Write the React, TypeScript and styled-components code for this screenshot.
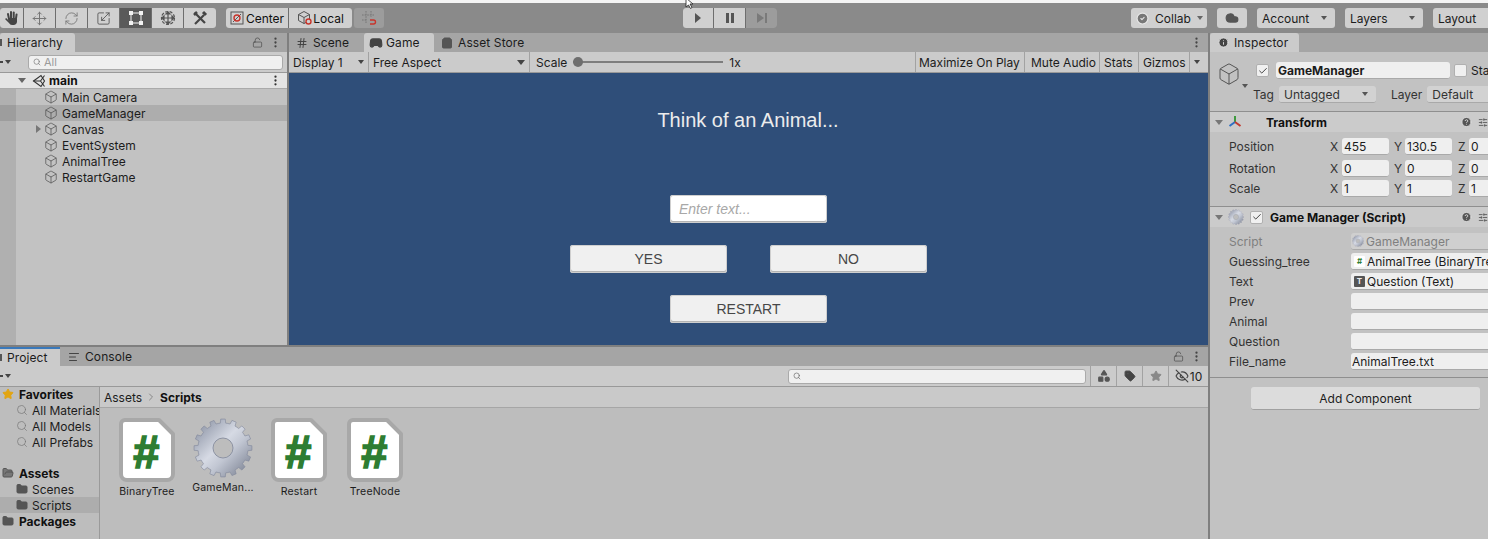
import React from "react";
import styled, { createGlobalStyle } from "styled-components";
import { Move, RefreshCw, Scaling, Box, Search, EllipsisVertical, Folder, FolderOpen, Star, Gamepad2, ShoppingBag, Hash, Check, Cloud, Info, CircleHelp, Tag, EyeOff, AlignLeft, SlidersHorizontal, LockOpen, Shapes, CircleCheck, ChevronRight } from "lucide-react";

const Global = createGlobalStyle`
  html, body { margin: 0; padding: 0; background: #bdbdbd; overflow: hidden; }
  * { box-sizing: border-box; }
  body { font-family: Inter, "Liberation Sans", sans-serif; font-size: 12px; color: #1c1c1c; }
`;

const Page = styled.div`
  position: relative; width: 1488px; height: 539px; overflow: hidden;
  display: flex; flex-direction: column; background: #7f7f7f;
`;
const TopStrip = styled.div`height: 3px; background: #f4f4f4;`;
const Toolbar = styled.div`
  height: 30px; background: #8a8a8a; display: flex; align-items: flex-start; padding-top: 5px;
`;
const ToolLeft = styled.div`width: 683px; display: flex; flex-shrink: 0;`;
const ButtonGroup = styled.div<{ $ml?: number }>`
  display: flex; height: 20px; margin-left: ${p => p.$ml ?? 0}px; gap: 1px; flex-shrink: 0;
  background: #6e6e6e; border-radius: 3px; overflow: hidden;
`;
const ToolButton = styled.div<{ $w: number; $active?: boolean; $dim?: boolean; $gap?: number }>`
  width: ${p => p.$w}px; height: 20px; display: flex; align-items: center; justify-content: center; gap: ${p => p.$gap ?? 2}px;
  background: ${p => (p.$active ? "#5a5a5a" : p.$dim ? "#9c9c9c" : "#d0d0d0")};
  color: ${p => (p.$active ? "#f0f0f0" : p.$dim ? "#777" : "#444")};
  font-size: 12px; white-space: nowrap;
  span { color: #111; }
`;
const ToolRight = styled.div`margin-left: 354px; display: flex; gap: 10px; flex-shrink: 0;`;
const DropButton = styled.div<{ $w: number; $pr?: number }>`
  width: ${p => p.$w}px; height: 20px; background: #d0d0d0; border-radius: 3px; color: #1c1c1c;
  display: flex; align-items: center; justify-content: space-between; padding: 0 ${p => p.$pr ?? 8}px 0 5px; flex-shrink: 0; font-size: 12px;
`;
const CloudButton = styled(DropButton)`justify-content: center; padding: 0;`;
const Triangle = styled.i<{ $dir?: "down" | "right"; $c?: string; $s?: number }>`
  display: inline-block; width: 0; height: 0; flex-shrink: 0;
  ${p => (p.$dir === "right"
    ? `border-top: ${p.$s ?? 4}px solid transparent; border-bottom: ${p.$s ?? 4}px solid transparent; border-left: ${(p.$s ?? 4) + 1}px solid ${p.$c ?? "#666"};`
    : `border-left: ${p.$s ?? 4}px solid transparent; border-right: ${p.$s ?? 4}px solid transparent; border-top: ${(p.$s ?? 4) + 1}px solid ${p.$c ?? "#444"};`)}
`;

const Workspace = styled.div`flex: 1; display: flex; gap: 2px; min-height: 0;`;
const LeftColumn = styled.div`width: 1208px; display: flex; flex-direction: column; gap: 2px;`;
const TopRow = styled.div`height: 312px; display: flex; gap: 2px;`;
const Panel = styled.div<{ $w?: number }>`
  ${p => (p.$w ? `width: ${p.$w}px;` : "flex: 1;")} display: flex; flex-direction: column; background: #c2c2c2; min-width: 0; overflow: hidden;
`;
const TabBar = styled.div`
  height: 19px; flex-shrink: 0; background: #a5a5a5; display: flex; align-items: stretch; color: #1c1c1c;
`;
const TabItem = styled.div<{ $active?: boolean; $w: number; $pl?: number; $blue?: boolean; $gap?: number }>`
  width: ${p => p.$w}px; padding-left: ${p => p.$pl ?? 7}px; display: flex; align-items: center; gap: ${p => p.$gap ?? 5}px;
  background: ${p => (p.$active ? "#cbcbcb" : "transparent")}; white-space: nowrap; overflow: hidden;
  border-radius: 3px 3px 0 0; letter-spacing: 0.1px;
  ${p => p.$blue && "border-top: 2px solid #3a79bb; border-radius: 0;"}
`;
const TabStub = styled.i`display: block; width: 2px; height: 7px; background: #555;`;
const TabTools = styled.div`margin-left: auto; display: flex; align-items: center; gap: 3px; padding-right: 5px; color: #444;`;
const SubBar = styled.div`
  height: 21px; flex-shrink: 0; background: #cbcbcb; border-bottom: 1px solid #999; display: flex; align-items: center;
`;
const MiniMenu = styled.div`width: 28px; padding-left: 0; display: flex; align-items: center; gap: 2px; color: #444; flex-shrink: 0;`;
const Dash = styled.i`display: block; width: 3px; height: 2px; background: #444;`;
const SearchBox = styled.div<{ $w: number; $ml?: number }>`
  width: ${p => p.$w}px; margin-left: ${p => p.$ml ?? 0}px; height: 15px; background: #f0f0f0; border: 1px solid #aaa; border-radius: 3px;
  display: flex; align-items: center; padding-left: 4px; gap: 3px; color: #9a9a9a; font-size: 11px; flex-shrink: 0;
`;
const TreeBody = styled.div`flex: 1; display: flex; min-height: 0;`;
const Gutter = styled.div`width: 16px; background: #b0b0b0; padding-top: 16px; flex-shrink: 0;`;
const GutterMark = styled.div`height: 16px; margin-top: 16px; background: #9d9d9d;`;
const TreeList = styled.div`flex: 1; min-width: 0;`;
const SceneRow = styled.div`
  height: 16px; margin-left: -16px; width: 287px; background: #e4e4e4; display: flex; align-items: center; border-bottom: 1px solid #aaa; font-weight: 700; color: #111;
`;
const TreeRow = styled.div<{ $sel?: boolean }>`
  height: 16px; display: flex; align-items: center; background: ${p => (p.$sel ? "#adadad" : "transparent")};
`;
const ArrowSlot = styled.div<{ $w: number }>`width: ${p => p.$w}px; display: flex; justify-content: flex-end; align-items: center; padding-right: 3px; flex-shrink: 0;`;
const RowText = styled.span<{ $ml?: number }>`margin-left: ${p => p.$ml ?? 4}px; white-space: nowrap;`;
const LogoSlot = styled.span`margin-left: 3px; display: flex;`;
const GameBar = styled(SubBar)``;
const BarCell = styled.div<{ $w: number; $between?: boolean; $pl?: number; $noLine?: boolean; $lineLeft?: boolean }>`
  width: ${p => p.$w}px; height: 100%; display: flex; align-items: center; padding-left: ${p => p.$pl ?? 4}px; padding-right: 4px;
  justify-content: ${p => (p.$between ? "space-between" : "flex-start")}; white-space: nowrap; flex-shrink: 0; color: #1c1c1c;
  border-right: ${p => (p.$noLine ? "none" : "1px solid #a2a2a2")};
  border-left: ${p => (p.$lineLeft ? "1px solid #a2a2a2" : "none")};
`;
const ScaleCell = styled.div`display: flex; align-items: center; width: 385px; padding-left: 6px; flex-shrink: 0;`;
const Slider = styled.div`
  position: relative; width: 150px; height: 2px; margin: 0 6px 0 6px; background: #7d7d7d;
  &::before { content: ""; position: absolute; left: 0; top: -4px; width: 10px; height: 10px; border-radius: 50%; background: #6e6e6e; }
`;
const GameView = styled.div`
  flex: 1; background: #2f4e79; display: flex; flex-direction: column; align-items: center; padding-top: 35px;
`;
const GameTitle = styled.div`
  font: 20px/24px "Liberation Sans", Arial, sans-serif; color: #ececec; margin-bottom: 63px; margin-left: -1px;
`;
const GameControl = styled.div<{ $input?: boolean }>`
  width: 157px; height: 28px; border-radius: 3px; display: flex; align-items: center;
  box-shadow: inset 0 0 0 1px #cfcfcf, inset 0 -1px 0 1px #b4b4b4;
  background: ${p => (p.$input ? "#ffffff" : "#f0f0f0")};
  justify-content: ${p => (p.$input ? "flex-start" : "center")};
  padding-left: ${p => (p.$input ? 9 : 0)}px;
  font: ${p => (p.$input ? "italic " : "")}14px "Liberation Sans", Arial, sans-serif;
  color: ${p => (p.$input ? "#a8a8a8" : "#474747")};
`;
const GameRow = styled.div`display: flex; gap: 43px; margin: 22px 0;`;

const Project = styled(Panel)`flex: 1; background: #bdbdbd;`;
const ProjectBody = styled.div`flex: 1; display: flex; min-height: 0;`;
const ProjectSide = styled.div`width: 100px; border-right: 1px solid #9a9a9a; flex-shrink: 0; overflow: hidden; padding-top: 0;`;
const SideRow = styled.div<{ $indent?: number; $bold?: boolean; $sel?: boolean; $mt?: number }>`
  height: 16px; display: flex; align-items: center; gap: ${p => (p.$bold ? 5 : 4)}px; padding-left: ${p => p.$indent ?? 2}px; margin-top: ${p => p.$mt ?? 0}px;
  font-weight: ${p => (p.$bold ? 700 : 400)}; white-space: nowrap; background: ${p => (p.$sel ? "#adadad" : "transparent")};
  color: ${p => (p.$bold ? "#111" : "#1c1c1c")};
  svg { flex-shrink: 0; }
`;
const ProjectMain = styled.div`flex: 1; min-width: 0; display: flex; flex-direction: column;`;
const Breadcrumb = styled.div`
  height: 21px; background: #c9c9c9; border-bottom: 1px solid #a6a6a6; display: flex; align-items: center; gap: 3px; padding-left: 4px; flex-shrink: 0;
  b { font-weight: 700; color: #111; }
`;
const AssetGrid = styled.div`display: flex; padding: 10px 0 0 9px;`;
const AssetCard = styled.div`
  width: 76px; display: flex; flex-direction: column; align-items: center; font-size: 10.5px; color: #1c1c1c; letter-spacing: 0.2px;
  svg { display: block; height: 64px; }
  span { margin-top: 3px; }
`;
const BarGap = styled.div<{ $w?: number }>`${p => (p.$w ? `width: ${p.$w}px; flex-shrink: 0;` : "flex: 1;")}`;
const FilterCell = styled.div<{ $w: number; $dark?: boolean }>`
  width: ${p => p.$w}px; height: 100%; display: flex; align-items: center; justify-content: center; gap: 1px; border-left: 1px solid #a2a2a2; flex-shrink: 0;
  color: ${p => (p.$dark ? "#222" : "#555")};
`;

const Inspector = styled(Panel)`flex: 1; background: #c2c2c2;`;
const InspectorHead = styled.div`
  height: 60px; border-bottom: 1px solid #8f8f8f; flex-shrink: 0; display: flex; flex-direction: column; padding: 10px 0 0 7px;
`;
const HeadLine = styled.div`display: flex; align-items: center; height: 17px; white-space: nowrap;`;
const CubeWrap = styled.div`position: relative; width: 24px; height: 24px; margin-top: 6px; flex-shrink: 0; color: #555;`;
const CubeArrow = styled.div`position: absolute; right: -7px; bottom: -2px; display: flex;`;
const CheckBox = styled.div<{ $off?: boolean; $ml?: number }>`
  width: 13px; height: 13px; border-radius: 2px; background: #f0f0f0; border: 1px solid #b0b0b0; flex-shrink: 0;
  margin-left: ${p => p.$ml ?? 0}px; display: flex; align-items: center; justify-content: center; color: #222;
`;
const TextField = styled.div<{ $w: number; $bold?: boolean; $grey?: boolean; $h?: number; $ml?: number }>`
  width: ${p => p.$w}px; height: ${p => p.$h ?? 17}px; background: ${p => (p.$grey ? "#cfcfcf" : "#efefef")}; border-radius: 3px; border-bottom: 1px solid #a9a9a9;
  display: flex; align-items: center; padding-left: 2px; gap: 2px; white-space: nowrap; flex-shrink: 0; overflow: hidden;
  margin-left: ${p => p.$ml ?? 0}px;
  font-weight: ${p => (p.$bold ? 700 : 400)}; color: ${p => (p.$grey ? "#7f7f7f" : "#1c1c1c")};
`;
const SelectField = styled.div<{ $w: number; $ml?: number }>`
  width: ${p => p.$w}px; margin-left: ${p => p.$ml ?? 0}px; height: 17px; background: #d2d2d2; border-radius: 3px; border-bottom: 1px solid #a9a9a9;
  display: flex; align-items: center; justify-content: space-between; padding: 0 8px 0 5px; flex-shrink: 0; white-space: nowrap;
`;
const TagLine = styled(HeadLine)`margin-top: 7px; padding-left: 36px; color: #333;`;
const InlineText = styled.span<{ $ml: number }>`margin-left: ${p => p.$ml}px;`;
const Section = styled.div<{ $h: number }>`height: ${p => p.$h}px; flex-shrink: 0; border-bottom: 1px solid #8f8f8f;`;
const SectionHead = styled.div`
  height: 20px; display: flex; align-items: center; padding-left: 5px; background: #cbcbcb; font-weight: 700; color: #111; position: relative;
`;
const HeadIcon = styled.span`margin-left: 5px; display: flex;`;
const HeadActions = styled.div`margin-left: auto; display: flex; gap: 6px; align-items: center; color: #555; width: 27px; flex-shrink: 0; overflow: hidden;`;
const TransformRow = styled.div<{ $mt: number }>`
  display: grid; grid-template-columns: 101px 12px 47px 5px 11px 47px 6px 11px 40px; margin-top: ${p => p.$mt}px; padding-left: 19px; height: 17px; align-items: center; color: #333;
`;
const ScriptRow = styled.div<{ $first?: boolean; $dim?: boolean }>`
  display: grid; grid-template-columns: 122px 200px; height: 17px; margin-top: ${p => (p.$first ? 6 : 3)}px; padding-left: 19px; align-items: center;
  color: ${p => (p.$dim ? "#7f7f7f" : "#333")};
  & > div { padding-left: 1px; }
`;
const AxisLabel = styled.span<{ $col: number }>`grid-column: ${p => p.$col};`;
const AddWrap = styled.div`display: flex; padding: 9px 0 0 41px;`;
const AddButton = styled.div`
  width: 229px; height: 23px; background: #dcdcdc; border-radius: 3px; border-bottom: 1px solid #a0a0a0; display: flex; align-items: center; justify-content: center;
`;
const Cursor = styled.svg`position: absolute; left: 685px; top: -2px;`;
const FieldIcon = styled.i<{ $bg: string; $fg: string }>`
  display: flex; width: 11px; height: 11px; background: ${p => p.$bg}; color: ${p => p.$fg}; align-items: center; justify-content: center; flex-shrink: 0; border-radius: 1px; font-style: normal;
  font-size: 8px; font-weight: 700; margin-left: 2px;
`;

const Cube = ({ s = 14 }: { s?: number }) => <Box size={s} strokeWidth={1.2} color="#4a4a4a" />;

const gearPath = (() => {
  const pts: string[] = [];
  const n = 16, cx = 30, cy = 30, ro = 29, ri = 25;
  for (let i = 0; i < n; i++) {
    const a = (i / n) * Math.PI * 2, w = Math.PI / n;
    const P = (r: number, t: number) => `${(cx + r * Math.cos(t)).toFixed(2)} ${(cy + r * Math.sin(t)).toFixed(2)}`;
    pts.push(`${i ? "L" : "M"}${P(ri, a - w)}`, `L${P(ri, a - w * 0.55)}`, `L${P(ro, a - w * 0.4)}`, `L${P(ro, a + w * 0.4)}`, `L${P(ri, a + w * 0.55)}`);
  }
  return pts.join(" ") + "Z";
})();

const GearIcon = ({ size, id }: { size: number; id: string }) => (
  <svg width={size} height={size} viewBox="0 0 60 60" style={{ height: size, flexShrink: 0 }}>
    <defs>
      <linearGradient id={id} x1="0" y1="0" x2="1" y2="1">
        <stop offset="0" stopColor="#7f8799" /><stop offset="0.45" stopColor="#d6dae4" /><stop offset="0.6" stopColor="#c2c7d3" /><stop offset="1" stopColor="#6f7687" />
      </linearGradient>
    </defs>
    <path d={gearPath} fill={`url(#${id})`} stroke="#80869a" strokeWidth="0.6" />
    <circle cx="30" cy="30" r="10" fill="#bdbdbd" stroke="#8d93a3" />
  </svg>
);

const ScriptIcon = () => (
  <svg width="56" height="64" viewBox="0 0 56 64">
    <path d="M6 2 H40 L54 16 V56 a6 6 0 0 1 -6 6 H8 a6 6 0 0 1 -6 -6 V6 a4 4 0 0 1 4 -4 Z" fill="#fff" stroke="#a8a8a8" strokeWidth="4" strokeLinejoin="round" />
    <text x="27.5" y="50" textAnchor="middle" fontFamily="'Liberation Sans', sans-serif" fontWeight="700" fontSize="47" fill="#2e7d32" stroke="#2e7d32" strokeWidth="1.6">#</text>
  </svg>
);

const HandTool = () => (
  <svg width="16" height="16" viewBox="0 0 16 16" fill="#444">
    <rect x="3.4" y="3" width="2" height="7" rx="1" transform="rotate(-12 4.4 6)" />
    <rect x="6" y="1" width="2" height="8" rx="1" />
    <rect x="8.7" y="1.6" width="2" height="8" rx="1" />
    <rect x="11.2" y="3.4" width="2" height="7" rx="1" transform="rotate(8 12 7)" />
    <path d="M4 8h9v3.5c0 2-1.5 3.5-3.5 3.5h-1.5c-1.4 0-2.2-.7-3-2L1.4 9.6c-.5-.9.7-1.7 1.4-1L4.5 10.5z" />
  </svg>
);
const RectTool = () => (
  <svg width="14" height="14" viewBox="0 0 14 14" fill="none" stroke="#f2f2f2">
    <rect x="2" y="2" width="10" height="10" strokeWidth="1" />
    {[[0, 0], [10, 0], [0, 10], [10, 10]].map(([x, y]) => <rect key={x + "-" + y} x={x} y={y} width="4" height="4" fill="#f2f2f2" stroke="none" />)}
  </svg>
);
const ComboTool = () => (
  <svg width="16" height="16" viewBox="0 0 16 16" fill="none" stroke="#555" strokeWidth="1.2">
    <circle cx="8" cy="8" r="6.5" strokeDasharray="3 1.5" /><path d="M8 3v10M3 8h10" /><path d="M8 2l-2 2h4zM8 14l-2-2h4zM2 8l2-2v4zM14 8l-2-2v4z" fill="#555" />
  </svg>
);
const ToolsIcon = () => (
  <svg width="16" height="16" viewBox="0 0 16 16" fill="none" stroke="#444" strokeWidth="2.2">
    <path d="M3 14L12 5" /><path d="M2.5 2.5L13 13" /><path d="M11 2l3 3" strokeWidth="3" /><path d="M2 5l3-3" strokeWidth="2.5" />
  </svg>
);
const CenterIcon = () => (
  <svg width="14" height="14" viewBox="0 0 14 14" fill="none">
    <rect x="1" y="1" width="12" height="12" stroke="#555" /><path d="M3 11L11 3" stroke="#555" /><circle cx="7" cy="7" r="3" stroke="#c8352c" strokeWidth="1.4" />
  </svg>
);
const LocalIcon = () => (
  <svg width="16" height="16" viewBox="0 0 16 16" fill="none">
    <path d="M7 1.5l5.5 3v6L7 13.5l-5.5-3v-6zM1.5 4.5L7 7.5l5.5-3M7 7.5v6" stroke="#555" /><circle cx="11.5" cy="11.5" r="2.5" stroke="#c8352c" strokeWidth="1.4" fill="#d0d0d0" />
  </svg>
);
const SnapIcon = () => (
  <svg width="16" height="16" viewBox="0 0 16 16" fill="none">
    <path d="M5 1v13M10 1v6M1 5h13M1 10h5" stroke="#777" strokeDasharray="1.6 1" /><path d="M9 10h3.5a2 2 0 0 1 0 4H9" stroke="#c8352c" strokeWidth="1.4" />
  </svg>
);
const UnityLogo = () => (
  <svg width="14" height="14" viewBox="0 0 14 14" fill="none" stroke="#333" strokeWidth="1.1">
    <path d="M1.5 7L9 1.5 12.5 7 9 12.5z" /><path d="M1.5 7H8.5L12.5 1.5M8.5 7l4 5.5" />
  </svg>
);
const AxisIcon = () => (
  <svg width="14" height="14" viewBox="0 0 14 14" fill="none" strokeWidth="2">
    <path d="M7 7V1" stroke="#3f9a3f" /><path d="M7 7L1.5 11" stroke="#2d6fc4" /><path d="M7 7l5.5 4" stroke="#c23b30" />
  </svg>
);

export default function App() {
  const tools = [
    { w: 23, el: <HandTool /> },
    { w: 31, el: <Move size={15} color="#777" strokeWidth={1.6} /> },
    { w: 31, el: <RefreshCw size={15} color="#777" strokeWidth={1.4} /> },
    { w: 31, el: <Scaling size={15} color="#555" strokeWidth={1.4} /> },
    { w: 31, el: <RectTool />, active: true },
    { w: 31, el: <ComboTool /> },
    { w: 32, el: <ToolsIcon /> },
  ];
  const hierarchy = ["Main Camera", "GameManager", "Canvas", "EventSystem", "AnimalTree", "RestartGame"];
  const assets = ["BinaryTree", "GameMan...", "Restart", "TreeNode"];
  const transforms = [
    { label: "Position", v: ["455", "130.5", "0"], mt: 6 },
    { label: "Rotation", v: ["0", "0", "0"], mt: 5 },
    { label: "Scale", v: ["1", "1", "1"], mt: 3 },
  ];
  return (
    <Page>
      <Global />
      <TopStrip />
      <Toolbar>
        <ToolLeft>
          <ButtonGroup>
            {tools.map((t, i) => <ToolButton key={i} $w={t.w} $active={t.active}>{t.el}</ToolButton>)}
          </ButtonGroup>
          <ButtonGroup $ml={10}>
            <ToolButton $w={62}><CenterIcon /><span>Center</span></ToolButton>
            <ToolButton $w={63} $gap={0}><LocalIcon /><span>Local</span></ToolButton>
          </ButtonGroup>
          <ButtonGroup $ml={2}>
            <ToolButton $w={30} $dim><SnapIcon /></ToolButton>
          </ButtonGroup>
        </ToolLeft>
        <ButtonGroup>
          <ToolButton $w={30}><Triangle $dir="right" $s={5} $c="#555" /></ToolButton>
          <ToolButton $w={31}>
            <svg width="10" height="10" viewBox="0 0 10 10" fill="#555"><rect x="1" y="0" width="3" height="10" /><rect x="6" y="0" width="3" height="10" /></svg>
          </ToolButton>
          <ToolButton $w={31} $dim>
            <svg width="12" height="10" viewBox="0 0 12 10" fill="#7a7a7a"><path d="M1 0l7 5-7 5z" /><rect x="9" y="0" width="2" height="10" /></svg>
          </ToolButton>
        </ButtonGroup>
        <ToolRight>
          <DropButton $w={76} $pr={4}><CircleCheck size={13} fill="#777" color="#e8e8e8" /><span>Collab</span><Triangle $s={3} $c="#666" /></DropButton>
          <CloudButton $w={30}><Cloud size={14} fill="#555" color="#555" /></CloudButton>
          <DropButton $w={78}>Account<Triangle $s={3} $c="#555" /></DropButton>
          <DropButton $w={78}>Layers<Triangle $s={3} $c="#555" /></DropButton>
          <DropButton $w={78}>Layout<Triangle $s={3} $c="#555" /></DropButton>
        </ToolRight>
      </Toolbar>

      <Workspace>
        <LeftColumn>
          <TopRow>
            <Panel $w={287}>
              <TabBar>
                <TabItem $active $w={75} $pl={0}><TabStub />Hierarchy</TabItem>
                <TabTools>
                  <LockOpen size={11} strokeWidth={1.4} style={{ marginRight: 3 }} />
                  <EllipsisVertical size={13} strokeWidth={2.2} />
                </TabTools>
              </TabBar>
              <SubBar>
                <MiniMenu><Dash /><Triangle $s={3} /></MiniMenu>
                <SearchBox $w={255}><Search size={8} color="#777" />All</SearchBox>
              </SubBar>
              <TreeBody>
                <Gutter><GutterMark /></Gutter>
                <TreeList>
                  <SceneRow>
                    <ArrowSlot $w={29}><Triangle $s={4} $c="#666" /></ArrowSlot>
                    <LogoSlot><UnityLogo /></LogoSlot>
                    <RowText $ml={3}>main</RowText>
                    <TabTools><EllipsisVertical size={13} strokeWidth={2.2} color="#333" /></TabTools>
                  </SceneRow>
                  {hierarchy.map((h, i) => (
                    <TreeRow key={h} $sel={i === 1}>
                      <ArrowSlot $w={28}>{i === 2 && <Triangle $dir="right" $s={4} $c="#777" />}</ArrowSlot>
                      <Cube />
                      <RowText>{h}</RowText>
                    </TreeRow>
                  ))}
                </TreeList>
              </TreeBody>
            </Panel>
            <Panel>
              <TabBar>
                <TabItem $w={75} $pl={7}><Hash size={12} color="#444" />Scene</TabItem>
                <TabItem $active $w={70} $pl={5} $gap={3}><Gamepad2 size={14} fill="#444" color="#444" />Game</TabItem>
                <TabItem $w={100}><ShoppingBag size={12} fill="#555" color="#555" />Asset Store</TabItem>
                <TabTools><EllipsisVertical size={13} strokeWidth={2.2} /></TabTools>
              </TabBar>
              <GameBar>
                <BarCell $w={80} $between>Display 1<Triangle $s={3} /></BarCell>
                <BarCell $w={161} $between>Free Aspect<Triangle $s={4} /></BarCell>
                <ScaleCell>Scale<Slider />1x</ScaleCell>
                <BarCell $w={110} $pl={3} $lineLeft>Maximize On Play</BarCell>
                <BarCell $w={75} $pl={6}>Mute Audio</BarCell>
                <BarCell $w={39}>Stats</BarCell>
                <BarCell $w={51}>Gizmos</BarCell>
                <BarCell $w={17} $noLine><Triangle $s={3} /></BarCell>
              </GameBar>
              <GameView>
                <GameTitle>Think of an Animal...</GameTitle>
                <GameControl $input>Enter text...</GameControl>
                <GameRow>
                  <GameControl>YES</GameControl>
                  <GameControl>NO</GameControl>
                </GameRow>
                <GameControl>RESTART</GameControl>
              </GameView>
            </Panel>
          </TopRow>
          <Project>
            <TabBar>
              <TabItem $active $blue $w={60} $pl={0}><TabStub />Project</TabItem>
              <TabItem $w={90} $pl={8}><AlignLeft size={12} color="#444" />Console</TabItem>
              <TabTools><LockOpen size={11} strokeWidth={1.4} style={{ marginRight: 3 }} /><EllipsisVertical size={13} strokeWidth={2.2} /></TabTools>
            </TabBar>
            <SubBar>
              <MiniMenu><Dash /><Triangle $s={3} /></MiniMenu>
              <BarGap />
              <SearchBox $w={298}><Search size={8} color="#666" /></SearchBox>
              <BarGap $w={4} />
              <FilterCell $w={26}><Shapes size={14} fill="#555" /></FilterCell>
              <FilterCell $w={26}><Tag size={12} fill="#444" /></FilterCell>
              <FilterCell $w={26}><Star size={12} fill="#888" color="#888" /></FilterCell>
              <FilterCell $w={40} $dark><EyeOff size={14} color="#444" />10</FilterCell>
            </SubBar>
            <ProjectBody>
              <ProjectSide>
                <SideRow $mt={-1} $bold><Star size={12} fill="#e2a512" color="#e2a512" />Favorites</SideRow>
                <SideRow $indent={16}><Search size={12} color="#777" strokeWidth={1.4} />All Materials</SideRow>
                <SideRow $indent={16}><Search size={12} color="#777" strokeWidth={1.4} />All Models</SideRow>
                <SideRow $indent={16}><Search size={12} color="#777" strokeWidth={1.4} />All Prefabs</SideRow>
                <SideRow $bold $mt={15}><FolderOpen size={12} color="#555" fill="#777" />Assets</SideRow>
                <SideRow $indent={16}><Folder size={12} fill="#555" color="#555" />Scenes</SideRow>
                <SideRow $indent={16} $sel><Folder size={12} fill="#555" color="#555" />Scripts</SideRow>
                <SideRow $bold><Folder size={12} fill="#555" color="#555" />Packages</SideRow>
              </ProjectSide>
              <ProjectMain>
                <Breadcrumb>Assets<ChevronRight size={12} color="#888" /><b>Scripts</b></Breadcrumb>
                <AssetGrid>
                  {assets.map(a => (
                    <AssetCard key={a}>
                      {a.startsWith("Game") ? <GearIcon size={60} id="bigGear" /> : <ScriptIcon />}
                      <span>{a}</span>
                    </AssetCard>
                  ))}
                </AssetGrid>
              </ProjectMain>
            </ProjectBody>
          </Project>
        </LeftColumn>

        <Inspector>
          <TabBar>
            <TabItem $active $w={89} $pl={8}><Info size={11} fill="#444" color="#ddd" />Inspector</TabItem>
          </TabBar>
          <InspectorHead>
            <HeadLine>
              <CubeWrap>
                <Box size={24} strokeWidth={1} />
                <CubeArrow><Triangle $s={3} $c="#555" /></CubeArrow>
              </CubeWrap>
              <CheckBox $ml={15}><Check size={10} strokeWidth={2} /></CheckBox>
              <TextField $w={174} $bold $ml={7}>GameManager</TextField>
              <CheckBox $ml={4} />
              <InlineText $ml={4}>Static</InlineText>
            </HeadLine>
            <TagLine>
              <span>Tag</span>
              <SelectField $w={97} $ml={5}>Untagged<Triangle $s={3} $c="#555" /></SelectField>
              <InlineText $ml={15}>Layer</InlineText>
              <SelectField $w={80} $ml={5}>Default</SelectField>
            </TagLine>
          </InspectorHead>
          <Section $h={95}>
            <SectionHead>
              <Triangle $s={4} $c="#777" />
              <HeadIcon><AxisIcon /></HeadIcon>
              <InlineText $ml={24}>Transform</InlineText>
              <HeadActions><CircleHelp size={12} fill="#555" color="#ddd" /><SlidersHorizontal size={11} /></HeadActions>
            </SectionHead>
            {transforms.map(r => (
              <TransformRow key={r.label} $mt={r.mt}>
                <span>{r.label}</span>
                <AxisLabel $col={2}>X</AxisLabel>
                <TextField $w={47}>{r.v[0]}</TextField>
                <AxisLabel $col={5}>Y</AxisLabel>
                <TextField $w={47}>{r.v[1]}</TextField>
                <AxisLabel $col={8}>Z</AxisLabel>
                <TextField $w={40}>{r.v[2]}</TextField>
              </TransformRow>
            ))}
          </Section>
          <Section $h={171}>
            <SectionHead>
              <Triangle $s={4} $c="#777" />
              <HeadIcon><GearIcon size={16} id="smallGear" /></HeadIcon>
              <CheckBox $ml={6}><Check size={10} strokeWidth={2} /></CheckBox>
              <InlineText $ml={7}>Game Manager (Script)</InlineText>
              <HeadActions><CircleHelp size={12} fill="#555" color="#ddd" /><SlidersHorizontal size={11} /></HeadActions>
            </SectionHead>
            <ScriptRow $first $dim>
              <span>Script</span>
              <TextField $w={200} $grey><GearIcon size={12} id="fieldGear" />GameManager</TextField>
            </ScriptRow>
            <ScriptRow>
              <span>Guessing_tree</span>
              <TextField $w={200}><FieldIcon $bg="#fff" $fg="#2e7d32">#</FieldIcon>AnimalTree (BinaryTree)</TextField>
            </ScriptRow>
            <ScriptRow>
              <span>Text</span>
              <TextField $w={200}><FieldIcon $bg="#555" $fg="#eee">T</FieldIcon>Question (Text)</TextField>
            </ScriptRow>
            <ScriptRow><span>Prev</span><TextField $w={200} /></ScriptRow>
            <ScriptRow><span>Animal</span><TextField $w={200} /></ScriptRow>
            <ScriptRow><span>Question</span><TextField $w={200} /></ScriptRow>
            <ScriptRow><span>File_name</span><TextField $w={200}>AnimalTree.txt</TextField></ScriptRow>
          </Section>
          <AddWrap><AddButton>Add Component</AddButton></AddWrap>
        </Inspector>
      </Workspace>
      <Cursor width="10" height="11" viewBox="0 0 10 11"><path d="M1 0v9l2.5-2 2 3.5 1.5-1-2-3.5H8z" fill="#fff" stroke="#222" strokeWidth="0.8" /></Cursor>
    </Page>
  );
}
